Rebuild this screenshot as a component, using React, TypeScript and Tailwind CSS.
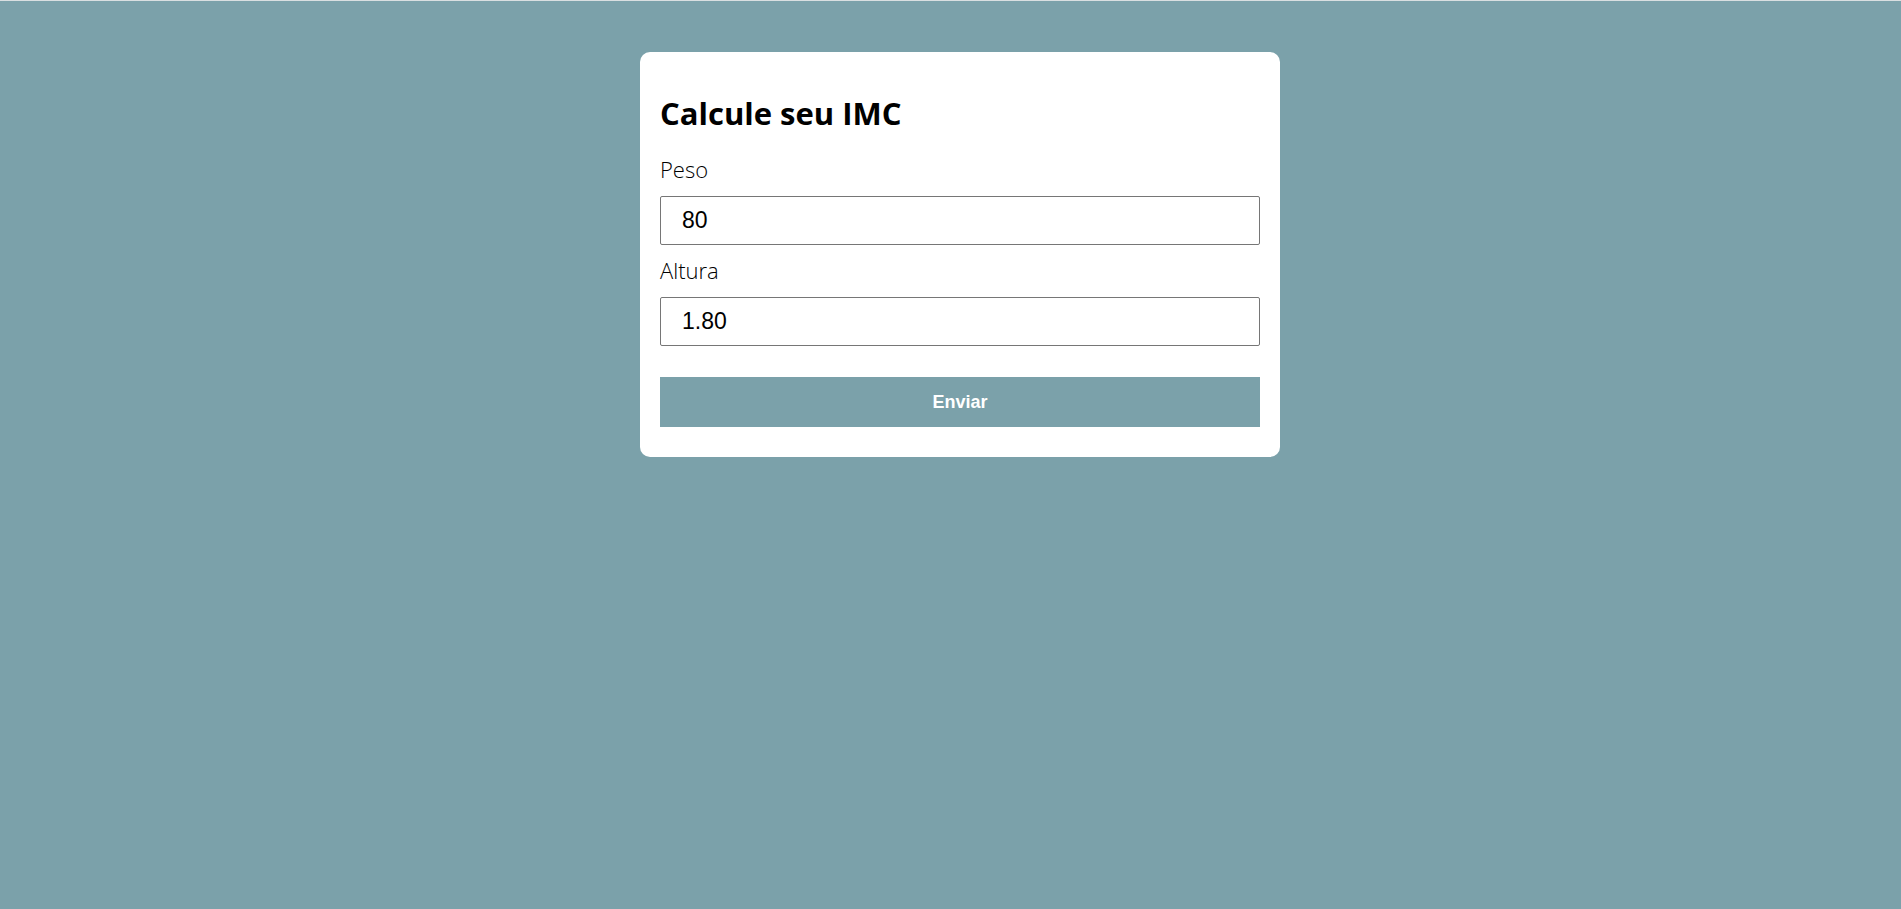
import React from "react";

export default function App() {
  return (
    <div className="min-h-[909px] w-full bg-[#7ba1aa]">
      <div className="h-px w-full bg-[#d9dfe1]" />
      <div className="flex justify-center pl-[19px] pt-[51px]">
        <form
          className="flex w-[640px] flex-col rounded-[10px] bg-white px-5 pb-[30px] pt-[41px]"
          onSubmit={(e) => e.preventDefault()}
        >
          <h2 className="m-0 text-[31px] font-bold leading-[41px] text-black [font-family:'Open_Sans',sans-serif]">
            Calcule seu IMC
          </h2>
          <label className="mt-[22px] text-[22px] font-light leading-[27px] text-black [font-family:'Open_Sans',sans-serif]">
            Peso
          </label>
          <input
            defaultValue="80"
            className="mt-[13px] h-[49px] w-full rounded-[2px] border border-[#767676] bg-white px-[21px] text-[23px] text-black outline-none [font-family:'Liberation_Sans',Arial,sans-serif]"
          />
          <label className="mt-[12px] text-[22px] font-light leading-[27px] text-black [font-family:'Open_Sans',sans-serif]">
            Altura
          </label>
          <input
            defaultValue="1.80"
            className="mt-[13px] h-[49px] w-full rounded-[2px] border border-[#767676] bg-white px-[21px] text-[23px] text-black outline-none [font-family:'Liberation_Sans',Arial,sans-serif]"
          />
          <button
            type="submit"
            className="mt-[31px] h-[50px] w-full bg-[#7ba1aa] text-[18px] font-bold text-white [font-family:'Liberation_Sans',Arial,sans-serif]"
          >
            Enviar
          </button>
        </form>
      </div>
    </div>
  );
}
